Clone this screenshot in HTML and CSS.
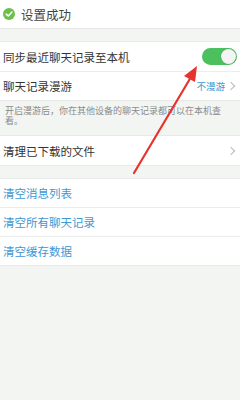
FILE: index.html
```html
<!DOCTYPE html>
<html lang="zh-CN">
<head>
  <meta charset="UTF-8" />
  <title>聊天记录设置</title>
  <meta name="viewport" content="width=device-width, initial-scale=1.0" />
  <link rel="stylesheet" href="styles.css">
</head>
<body>
  <header class="toast">
    <svg class="ok" width="12" height="12" viewBox="0 0 12 12">
      <circle cx="6" cy="6" r="6" fill="#6cc04a"/>
      <path d="M3.2 6.2 L5.2 8 L8.8 4.2" fill="none" stroke="#fff" stroke-width="1.6" stroke-linecap="round" stroke-linejoin="round"/>
    </svg>
    <span>设置成功</span>
  </header>

  <div class="gap"></div>

  <div class="group">
    <div class="row tall">
      <span>同步最近聊天记录至本机</span>
      <span class="switch"><span class="knob"></span></span>
    </div>
    <div class="row">
      <span>聊天记录漫游</span>
      <span class="extra">不漫游<i class="chev"></i></span>
    </div>
  </div>

  <p class="note">开启漫游后，你在其他设备的聊天记录都可以在本机查看。</p>

  <div class="group">
    <div class="row tall">
      <span>清理已下载的文件</span>
      <i class="chev"></i>
    </div>
  </div>

  <div class="gap"></div>

  <div class="group blue">
    <div class="row">清空消息列表</div>
    <div class="row">清空所有聊天记录</div>
    <div class="row">清空缓存数据</div>
  </div>

  <!-- red annotation arrow drawn over the page -->
  <svg class="arrow" width="240" height="400" viewBox="0 0 240 400">
    <line x1="134" y1="173" x2="191" y2="77" stroke="#e8322d" stroke-width="2.2" stroke-linecap="round"/>
    <polygon points="197,66 184,76 195,82" fill="#e8322d"/>
  </svg>
</body>
</html>
```

FILE: styles.css
```css
body {
  margin: 0;
  width: 240px;
  min-height: 400px;
  background: #f3f5f3;
  font-family: "Noto Sans CJK SC", "Noto Sans", sans-serif;
  color: #333;
  position: relative;
  overflow: hidden;
}
.toast {
  height: 29px;
  background: #fff;
  display: flex;
  align-items: center;
  gap: 6px;
  padding-left: 3px;
  font-size: 12.5px;
  color: #444;
  border-bottom: 1px solid #e6e8e6;
  box-sizing: border-box;
}
.gap {
  height: 12px;
}
.group {
  background: #fff;
  border-top: 1px solid #e8eae8;
  border-bottom: 1px solid #e8eae8;
}
.row {
  height: 28px;
  display: flex;
  align-items: center;
  justify-content: space-between;
  padding: 0 3px;
  font-size: 11.5px;
  border-top: 1px solid #eceeec;
}
.row:first-child {
  border-top: none;
}
.row.tall {
  height: 29px;
}
.switch {
  width: 35px;
  height: 17px;
  border-radius: 9px;
  background: #4cbf5f;
  display: flex;
  justify-content: flex-end;
  align-items: center;
  padding: 1px;
  box-sizing: border-box;
}
.knob {
  width: 15px;
  height: 15px;
  border-radius: 50%;
  background: #f4f4f4;
  box-shadow: 0 0 1px rgba(0, 0, 0, 0.3);
}
.extra {
  display: flex;
  align-items: center;
  gap: 3px;
  font-size: 9.5px;
  color: #3d98d3;
}
.chev {
  width: 5px;
  height: 5px;
  border-top: 1px solid #bbb;
  border-right: 1px solid #bbb;
  transform: rotate(45deg);
  margin-right: 3px;
}
.note {
  margin: 0;
  padding: 5px 5px 9px;
  font-size: 9px;
  line-height: 10px;
  color: #8a8c8a;
}
.blue .row {
  color: #3d98d3;
}
.arrow {
  position: absolute;
  left: 0;
  top: 0;
  pointer-events: none;
}
```
